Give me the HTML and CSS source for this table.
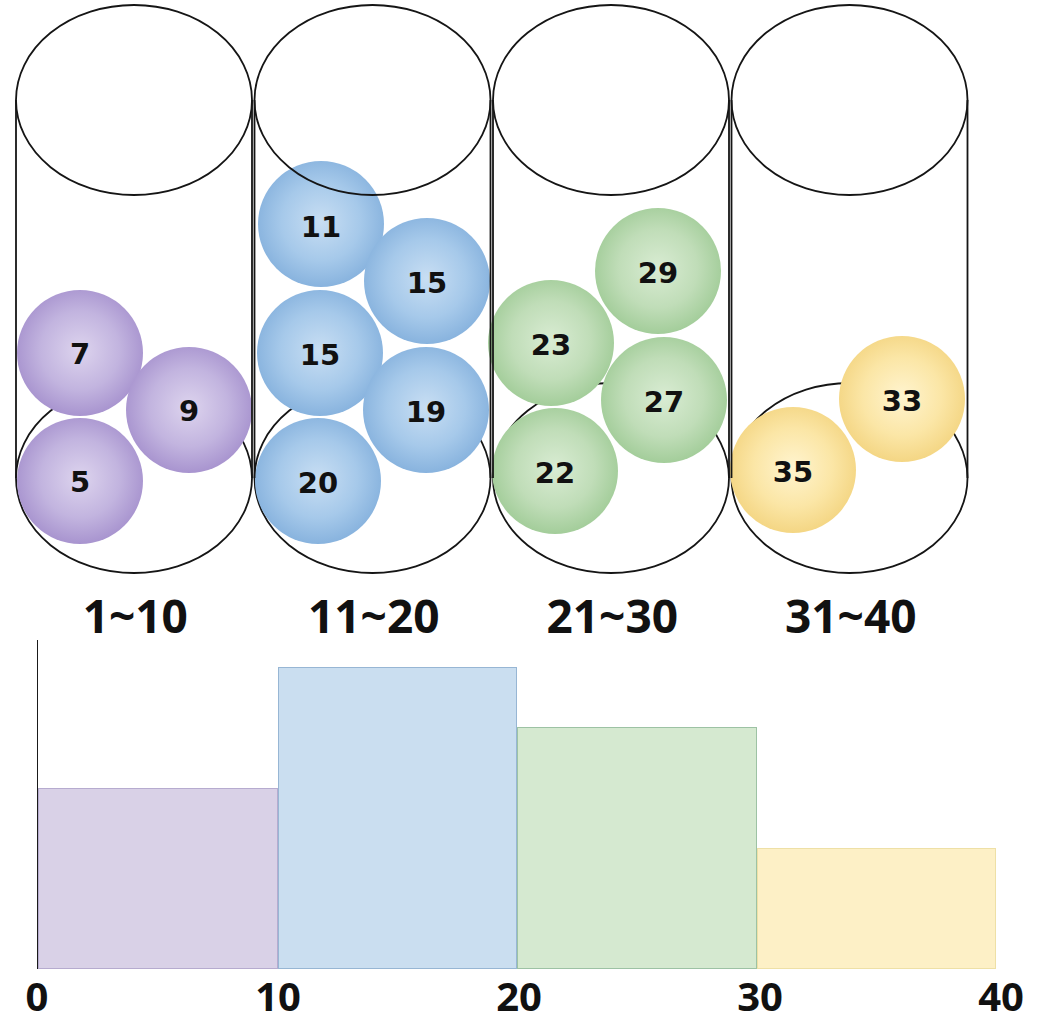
FILE: index.html
```html
<!DOCTYPE html>
<html lang="en">
<head>
<meta charset="utf-8">
<title>Histogram from binned balls</title>
<link rel="stylesheet" href="styles.css">
</head>
<body>
<main class="figure">
  <svg class="tubes" width="1040" height="592" viewBox="0 0 1040 592" xmlns="http://www.w3.org/2000/svg">
    <defs>
      <radialGradient id="g-purple" cx="50%" cy="48%" r="52%">
        <stop offset="0%" stop-color="#ddd4ee"/>
        <stop offset="60%" stop-color="#c2b4df"/>
        <stop offset="100%" stop-color="#a894cf"/>
      </radialGradient>
      <radialGradient id="g-blue" cx="50%" cy="48%" r="52%">
        <stop offset="0%" stop-color="#c8def3"/>
        <stop offset="60%" stop-color="#a6c9ea"/>
        <stop offset="100%" stop-color="#88b3de"/>
      </radialGradient>
      <radialGradient id="g-green" cx="50%" cy="48%" r="52%">
        <stop offset="0%" stop-color="#d9ecd3"/>
        <stop offset="60%" stop-color="#c0ddb8"/>
        <stop offset="100%" stop-color="#a3cd9a"/>
      </radialGradient>
      <radialGradient id="g-yellow" cx="50%" cy="48%" r="52%">
        <stop offset="0%" stop-color="#fff4cf"/>
        <stop offset="60%" stop-color="#fbe6a6"/>
        <stop offset="100%" stop-color="#f4d684"/>
      </radialGradient>
    </defs>

    <!-- bottom ellipses (behind balls) -->
    <g class="outline">
      <ellipse cx="134" cy="478" rx="118" ry="95"/>
      <ellipse cx="372.5" cy="478" rx="118" ry="95"/>
      <ellipse cx="611" cy="478" rx="118" ry="95"/>
      <ellipse cx="849.5" cy="478" rx="118" ry="95"/>
    </g>

    <!-- balls -->
    <g class="ball purple"><circle cx="80" cy="353" r="63"/><text x="80" y="364">7</text></g>
    <g class="ball purple"><circle cx="189" cy="410" r="63"/><text x="189" y="421">9</text></g>
    <g class="ball purple"><circle cx="80" cy="481" r="63"/><text x="80" y="492">5</text></g>

    <g class="ball blue"><circle cx="321" cy="224" r="63"/><text x="321" y="237">11</text></g>
    <g class="ball blue"><circle cx="427" cy="281" r="63"/><text x="427" y="293">15</text></g>
    <g class="ball blue"><circle cx="320" cy="353" r="63"/><text x="320" y="365">15</text></g>
    <g class="ball blue"><circle cx="426" cy="410" r="63"/><text x="426" y="422">19</text></g>
    <g class="ball blue"><circle cx="318" cy="481" r="63"/><text x="318" y="493">20</text></g>

    <g class="ball green"><circle cx="658" cy="271" r="63"/><text x="658" y="283">29</text></g>
    <g class="ball green"><circle cx="551" cy="343" r="63"/><text x="551" y="355">23</text></g>
    <g class="ball green"><circle cx="664" cy="400" r="63"/><text x="664" y="412">27</text></g>
    <g class="ball green"><circle cx="555" cy="471" r="63"/><text x="555" y="483">22</text></g>

    <g class="ball yellow"><circle cx="902" cy="399" r="63"/><text x="902" y="411">33</text></g>
    <g class="ball yellow"><circle cx="793" cy="470" r="63"/><text x="793" y="482">35</text></g>

    <!-- walls and top rims (over balls) -->
    <g class="outline">
      <line x1="16" y1="100" x2="16" y2="478"/>
      <line x1="252" y1="100" x2="252" y2="478"/>
      <line x1="254.5" y1="100" x2="254.5" y2="478"/>
      <line x1="490.5" y1="100" x2="490.5" y2="478"/>
      <line x1="493" y1="100" x2="493" y2="478"/>
      <line x1="729" y1="100" x2="729" y2="478"/>
      <line x1="731.5" y1="100" x2="731.5" y2="478"/>
      <line x1="967.5" y1="100" x2="967.5" y2="478"/>
      <ellipse cx="134" cy="100" rx="118" ry="95"/>
      <ellipse cx="372.5" cy="100" rx="118" ry="95"/>
      <ellipse cx="611" cy="100" rx="118" ry="95"/>
      <ellipse cx="849.5" cy="100" rx="118" ry="95"/>
    </g>
  </svg>

  <div class="ranges">
    <span>1~10</span>
    <span>11~20</span>
    <span>21~30</span>
    <span>31~40</span>
  </div>

  <div class="hist">
    <div class="bar bar-purple" style="height:181.5px"></div>
    <div class="bar bar-blue" style="height:302.5px"></div>
    <div class="bar bar-green" style="height:242px"></div>
    <div class="bar bar-yellow" style="height:121px"></div>
  </div>

  <div class="axis">
    <span>0</span>
    <span>10</span>
    <span>20</span>
    <span>30</span>
    <span>40</span>
  </div>
</main>
</body>
</html>
```

FILE: styles.css
```css
* { box-sizing: border-box; }

html, body {
  margin: 0;
  padding: 0;
  background: #ffffff;
}

body {
  width: 1040px;
  font-family: "Open Sans", "Noto Sans", "DejaVu Sans", sans-serif;
  color: #111111;
}

.figure {
  display: flex;
  flex-direction: column;
}

.tubes {
  display: block;
}

.outline ellipse,
.outline line {
  fill: none;
  stroke: #151515;
  stroke-width: 1.8;
}

.ball text {
  font-family: "DejaVu Sans", sans-serif;
  font-weight: 700;
  font-size: 29px;
  fill: #111111;
  text-anchor: middle;
}

.ball.purple circle { fill: url(#g-purple); }
.ball.blue circle { fill: url(#g-blue); }
.ball.green circle { fill: url(#g-green); }
.ball.yellow circle { fill: url(#g-yellow); }

.ranges {
  display: grid;
  grid-template-columns: repeat(4, 238.5px);
  margin-left: 16px;
  height: 46px;
  font-size: 46px;
  line-height: 46px;
  font-weight: 700;
}

.ranges span {
  text-align: center;
}

.hist {
  display: flex;
  align-items: flex-end;
  margin-top: 2px;
  margin-left: 37px;
  width: 959px;
  height: 329px;
  border-left: 1.5px solid #1a1a1a;
}

.bar {
  flex: 1 1 0;
  border: 1px solid;
}

.bar-purple { background: #d9d1e7; border-color: #b6abcf; }
.bar-blue { background: #cadef0; border-color: #97b6d4; }
.bar-green { background: #d5e9d0; border-color: #9dc2a4; }
.bar-yellow { background: #fdf0c6; border-color: #eee0a6; }

.axis {
  display: grid;
  grid-template-columns: repeat(5, 60px);
  column-gap: 181px;
  margin-top: 7px;
  margin-left: 7px;
  height: 40px;
  font-size: 40px;
  line-height: 40px;
  font-weight: 700;
}

.axis span {
  text-align: center;
}
```
